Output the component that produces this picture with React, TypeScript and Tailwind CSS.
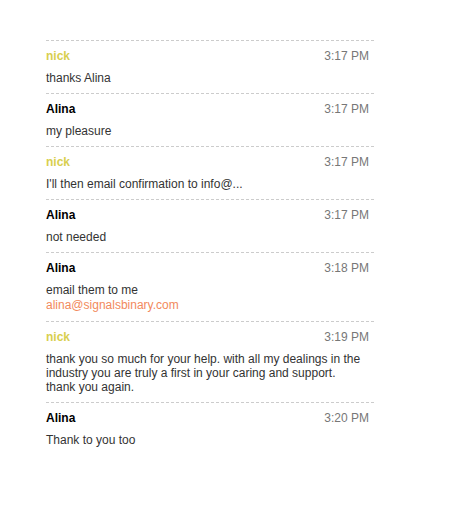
import React from "react";

interface Message {
  id: number;
  from: "nick" | "Alina";
  time: string;
  text: string[];
  email?: string;
}

const messages: Message[] = [
  { id: 1, from: "nick", time: "3:17 PM", text: ["thanks Alina"] },
  { id: 2, from: "Alina", time: "3:17 PM", text: ["my pleasure"] },
  { id: 3, from: "nick", time: "3:17 PM", text: ["I'll then email confirmation to info@..."] },
  { id: 4, from: "Alina", time: "3:17 PM", text: ["not needed"] },
  { id: 5, from: "Alina", time: "3:18 PM", text: ["email them to me"], email: "alina@signalsbinary.com" },
  {
    id: 6,
    from: "nick",
    time: "3:19 PM",
    text: [
      "thank you so much for your help. with all my dealings in the",
      "industry you are truly a first in your caring and support.",
      "thank you again.",
    ],
  },
  { id: 7, from: "Alina", time: "3:20 PM", text: ["Thank to you too"] },
];

const App = () => {
  return (
    <div
      className="w-[467px] h-[509px] bg-white pt-[40px] pl-[46px]"
      style={{ fontFamily: '"Liberation Sans", Arial, sans-serif' }}
    >
      <ul className="w-[328px]">
        {messages.map((msg) => (
          <li key={msg.id} className="border-t border-dashed border-[#cccccc] pt-[8px] pb-[8px]">
            <div className="flex justify-between items-center text-[12px] leading-[15px]">
              <span className={`font-bold ${msg.from === "nick" ? "text-[#d8cf4e]" : "text-black"}`}>
                {msg.from}
              </span>
              <span className="text-[#777777] pr-[5px]">{msg.time}</span>
            </div>
            <div className="mt-[7px] text-[12px] leading-[14px] text-[#333333]">
              {msg.text.map((line, i) => (
                <div key={i}>{line}</div>
              ))}
              {msg.email && (
                <div className="leading-[16px] text-[#f2895c]">{msg.email}</div>
              )}
            </div>
          </li>
        ))}
      </ul>
    </div>
  );
};

export default App;
